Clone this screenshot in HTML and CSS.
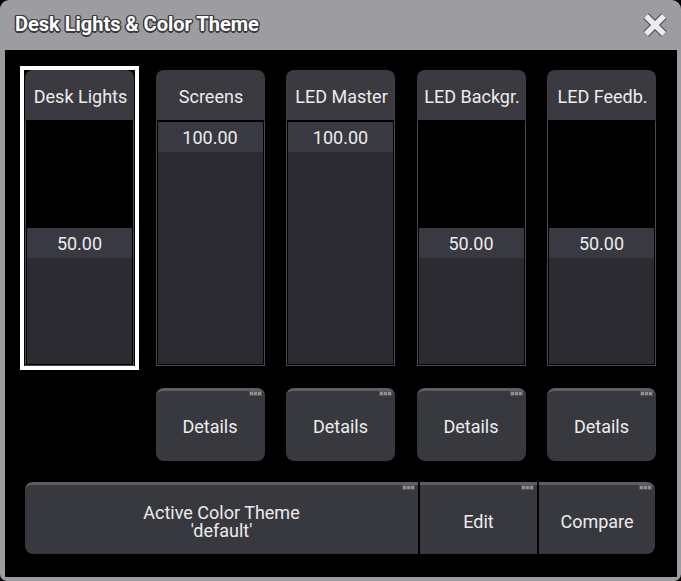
FILE: index.html
```html
<!DOCTYPE html>
<html lang="en">
<head>
    <meta charset="UTF-8">
    <meta name="viewport" content="width=device-width, initial-scale=1.0">
    <title>Desk Lights &amp; Color Theme</title>
    <link rel="stylesheet" href="styles.css">
</head>
<body>

    <div class="window">
        <div class="titlebar">
            <h1>Desk Lights &amp; Color Theme</h1>
            <svg class="close" width="24" height="24" viewBox="0 0 24 24">
                <path d="M3 3 L21 21 M21 3 L3 21" stroke="#4a4a4e" stroke-width="7.5" />
                <path d="M3 3 L21 21 M21 3 L3 21" stroke="#ececec" stroke-width="5.5" />
            </svg>
        </div>

        <div class="content">
            <!-- Faders -->
            <div class="faders">
                <div class="fader selected">
                    <div class="fader-head">Desk Lights</div>
                    <div class="track">
                        <div class="empty" style="flex-grow: 50"></div>
                        <div class="value">50.00</div>
                        <div class="fill" style="flex-grow: 50"></div>
                    </div>
                </div>
                <div class="fader">
                    <div class="fader-head">Screens</div>
                    <div class="track">
                        <div class="empty" style="flex-grow: 0"></div>
                        <div class="value">100.00</div>
                        <div class="fill" style="flex-grow: 100"></div>
                    </div>
                </div>
                <div class="fader">
                    <div class="fader-head">LED Master</div>
                    <div class="track">
                        <div class="empty" style="flex-grow: 0"></div>
                        <div class="value">100.00</div>
                        <div class="fill" style="flex-grow: 100"></div>
                    </div>
                </div>
                <div class="fader">
                    <div class="fader-head">LED Backgr.</div>
                    <div class="track">
                        <div class="empty" style="flex-grow: 50"></div>
                        <div class="value">50.00</div>
                        <div class="fill" style="flex-grow: 50"></div>
                    </div>
                </div>
                <div class="fader">
                    <div class="fader-head">LED Feedb.</div>
                    <div class="track">
                        <div class="empty" style="flex-grow: 50"></div>
                        <div class="value">50.00</div>
                        <div class="fill" style="flex-grow: 50"></div>
                    </div>
                </div>
            </div>

            <!-- Details -->
            <div class="details">
                <div></div>
                <div class="btn">Details<span class="dots"><i></i><i></i><i></i></span></div>
                <div class="btn">Details<span class="dots"><i></i><i></i><i></i></span></div>
                <div class="btn">Details<span class="dots"><i></i><i></i><i></i></span></div>
                <div class="btn">Details<span class="dots"><i></i><i></i><i></i></span></div>
            </div>

            <!-- Theme -->
            <div class="theme">
                <div class="btn theme-main">Active Color Theme<br>'default'<span class="dots"><i></i><i></i><i></i></span></div>
                <div class="btn theme-edit">Edit<span class="dots"><i></i><i></i><i></i></span></div>
                <div class="btn theme-compare">Compare<span class="dots"><i></i><i></i><i></i></span></div>
            </div>
        </div>
    </div>

</body>
</html>
```

FILE: styles.css
```css
/* Page */
body {
    margin: 0;
    background: #000;
    font-family: Roboto, "Liberation Sans", sans-serif;
    color: #ececec;
}

.window {
    width: 681px;
    height: 581px;
    box-sizing: border-box;
    background: #9d9da1;
    border-radius: 9px 9px 7px 7px;
    padding: 0 4px 4px 5px;
    display: flex;
    flex-direction: column;
}

/* Title bar */
.titlebar {
    height: 50px;
    flex: none;
    display: flex;
    align-items: center;
    justify-content: space-between;
    padding: 0 10px 0 10px;
}

    .titlebar h1 {
        margin: 0 0 2px 0;
        font-size: 20px;
        font-weight: 700;
        color: #fff;
        text-shadow: -1px -1px 0 #3a3a3e, 1px -1px 0 #3a3a3e, -1px 1px 0 #3a3a3e, 1px 1px 0 #3a3a3e,
                     0 -1.5px 0 #3a3a3e, 0 1.5px 0 #3a3a3e, -1.5px 0 0 #3a3a3e, 1.5px 0 0 #3a3a3e;
    }

    .titlebar .close {
        margin-top: 0;
    }

.content {
    flex: 1;
    background: #000;
    padding: 16px 0 0 15px;
}

/* Faders */
.faders,
.details {
    display: grid;
    grid-template-columns: repeat(5, 119px);
    column-gap: 11.5px;
}

.fader {
    height: 304px;
    box-sizing: border-box;
    border: 4px solid transparent;
    padding: 0 1px;
    display: flex;
    flex-direction: column;
}

    .fader.selected {
        border-color: #fff;
    }

.fader-head {
    height: 50px;
    flex: none;
    background: #3a3a40;
    border-radius: 8px 8px 0 0;
    display: flex;
    align-items: center;
    justify-content: center;
    font-size: 18px;
    padding: 2px 0 0 2px;
    box-sizing: border-box;
    white-space: nowrap;
}

.track {
    flex: 1;
    display: flex;
    flex-direction: column;
    background: #000;
    border: 1px solid #4a4a50;
    border-top-color: #000;
    padding: 1px;
}

    .track .empty {
        background: #000;
    }

    .track .value {
        height: 30px;
        flex: none;
        background: #393941;
        display: flex;
        align-items: center;
        justify-content: center;
        font-size: 18px;
    }

    .track .fill {
        background: #2c2b31;
    }

/* Buttons */
.btn {
    position: relative;
    background: #38383f;
    border-top: 3px solid #5e5e63;
    border-radius: 8px;
    display: flex;
    align-items: center;
    justify-content: center;
    text-align: center;
    font-size: 18px;
    line-height: 18px;
    box-sizing: border-box;
}

.dots {
    position: absolute;
    top: 0;
    right: 3px;
    display: flex;
    gap: 1px;
    padding: 1px;
    background: #55555a;
}

    .dots i {
        width: 3px;
        height: 3px;
        background: #8e8e93;
    }

.details {
    margin-top: 18px;
}

    .details .btn {
        margin: 0 5px;
        height: 73px;
        padding-top: 2px;
    }

.theme {
    display: flex;
    gap: 2px;
    margin: 21px 0 0 5px;
    width: 630px;
    height: 72px;
}

    .theme .btn {
        padding-top: 4px;
    }

.theme-main {
    width: 393px;
    border-radius: 8px 0 0 8px;
}

.theme-edit {
    width: 117px;
    border-radius: 0;
}

.theme-compare {
    flex: 1;
    border-radius: 0 8px 8px 0;
}
```
